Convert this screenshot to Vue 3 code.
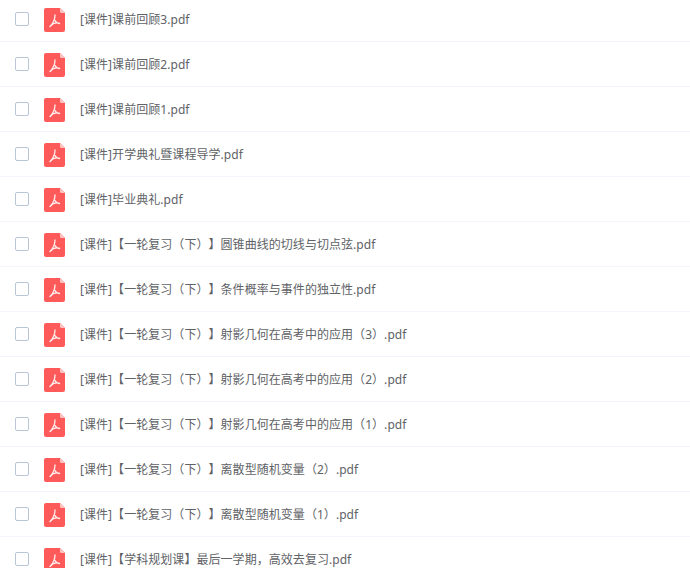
<script setup>
const files = [
  '[课件]课前回顾3.pdf',
  '[课件]课前回顾2.pdf',
  '[课件]课前回顾1.pdf',
  '[课件]开学典礼暨课程导学.pdf',
  '[课件]毕业典礼.pdf',
  '[课件]【一轮复习（下）】圆锥曲线的切线与切点弦.pdf',
  '[课件]【一轮复习（下）】条件概率与事件的独立性.pdf',
  '[课件]【一轮复习（下）】射影几何在高考中的应用（3）.pdf',
  '[课件]【一轮复习（下）】射影几何在高考中的应用（2）.pdf',
  '[课件]【一轮复习（下）】射影几何在高考中的应用（1）.pdf',
  '[课件]【一轮复习（下）】离散型随机变量（2）.pdf',
  '[课件]【一轮复习（下）】离散型随机变量（1）.pdf',
  '[课件]【学科规划课】最后一学期，高效去复习.pdf',
];
</script>

<template>
  <main class="list">
    <div v-for="file in files" :key="file" class="row">
      <span class="check"></span>
      <svg class="pdf" width="21" height="24" viewBox="0 0 21 24">
        <path d="M2 0H16L21 5V22a2 2 0 0 1-2 2H2a2 2 0 0 1-2-2V2a2 2 0 0 1 2-2Z" fill="#ff5a5a" />
        <path d="M16 0L21 5H17.500A1.500 1.500 0 0 1 16 3.500Z" fill="#ffc4c4" />
        <path d="M11 7C11 11 9.500 15 6 18.500M11 12.500C12 14.500 14 15.500 16 15.500C13 14.500 9 15 6 18.500" fill="none" stroke="#fff" stroke-opacity=".9" stroke-width="1.300" stroke-linecap="round" />
      </svg>
      <span class="name">{{ file }}</span>
    </div>
  </main>
</template>

<style scoped>
.list {
  height: 568px;
  overflow: hidden;
}

.row {
  height: 45px;
  box-sizing: border-box;
  border-bottom: 1px solid #f2f6fc;
  display: flex;
  align-items: center;
  padding-left: 15px;
}

.row:first-child {
  margin-top: -3px;
}

.check {
  width: 14px;
  height: 14px;
  box-sizing: border-box;
  border: 1px solid #b8c6d6;
  border-radius: 2px;
  background-color: #fff;
  flex: none;
}

.pdf {
  margin-left: 15px;
  margin-top: 2px;
  flex: none;
}

.name {
  margin-left: 15px;
  margin-bottom: 1px;
  font-family: "Noto Sans", "Noto Sans CJK SC", sans-serif;
  font-size: 12px;
  letter-spacing: 0.05px;
  color: #606266;
  white-space: nowrap;
  text-spacing-trim: space-all;
}
</style>

<style>
body {
  background-color: #fff;
}
</style>
